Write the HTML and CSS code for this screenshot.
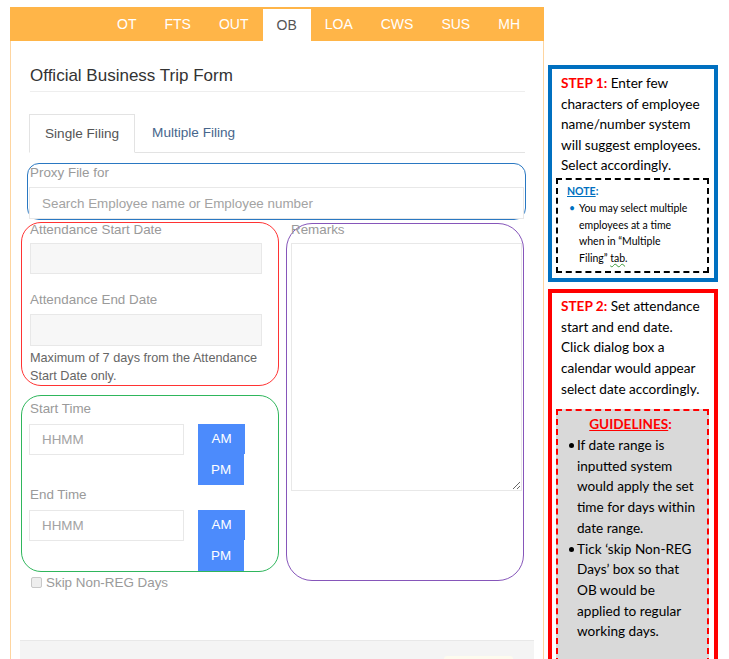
FILE: index.html
```html
<!DOCTYPE html>
<html lang="en">
<head>
<meta charset="utf-8">
<title>Official Business Trip Form</title>
<link rel="stylesheet" href="styles.css">
</head>
<body>
<div class="page">
  <div class="panel">
    <ul class="topnav">
      <li>OT</li>
      <li>FTS</li>
      <li>OUT</li>
      <li class="active">OB</li>
      <li>LOA</li>
      <li>CWS</li>
      <li>SUS</li>
      <li>MH</li>
    </ul>
    <div class="body">
      <h3 class="title">Official Business Trip Form</h3>
      <ul class="tabs">
        <li class="active">Single Filing</li>
        <li class="link">Multiple Filing</li>
      </ul>
      <div class="proxy">
        <label class="lbl">Proxy File for</label>
        <input class="field search" type="text" placeholder="Search Employee name or Employee number">
      </div>
      <div class="row">
        <div class="left">
          <div class="dates">
            <label class="lbl first">Attendance Start Date</label>
            <input class="field ro d1" type="text">
            <label class="lbl l2">Attendance End Date</label>
            <input class="field ro d2" type="text">
            <p class="help">Maximum of 7 days from the Attendance Start Date only.</p>
          </div>
          <div class="times">
            <label class="lbl st">Start Time</label>
            <div class="trow">
              <input class="field hh" type="text" placeholder="HHMM">
              <div class="ampm">
                <span class="btn am">AM</span>
                <span class="btn pm">PM</span>
              </div>
            </div>
            <label class="lbl et">End Time</label>
            <div class="trow">
              <input class="field hh" type="text" placeholder="HHMM">
              <div class="ampm">
                <span class="btn am">AM</span>
                <span class="btn pm">PM</span>
              </div>
            </div>
          </div>
          <label class="skip"><input type="checkbox" class="chk"> Skip Non-REG Days</label>
        </div>
        <div class="remarks">
          <label class="lbl first">Remarks</label>
          <textarea class="area"></textarea>
        </div>
      </div>
    </div>
    <div class="footer"><span class="fbtn"></span></div>
  </div>

  <div class="notes">
    <div class="step step1">
      <p class="steptext"><b class="red">STEP 1:</b> Enter few<br>characters of employee<br>name/number system<br>will suggest employees.<br>Select accordingly.</p>
      <div class="notebox">
        <p class="notehead"><u>NOTE</u>:</p>
        <ul class="notelist">
          <li>You may select multiple<br>employees at a time<br>when in “Multiple<br>Filing” <span class="spell">tab</span>.</li>
        </ul>
      </div>
    </div>
    <div class="step step2">
      <p class="steptext"><b class="red">STEP 2:</b> Set attendance<br>start and end date.<br>Click dialog box a<br>calendar would appear<br>select date accordingly.</p>
      <div class="guide">
        <p class="guidehead"><u>GUIDELINES</u>:</p>
        <ul class="guidelist">
          <li>If date range is<br>inputted system<br>would apply the set<br>time for days within<br>date range.</li>
          <li>Tick ‘skip Non-REG<br>Days’ box so that<br>OB would be<br>applied to regular<br>working days.</li>
        </ul>
      </div>
    </div>
  </div>
</div>
</body>
</html>
```

FILE: styles.css
```css
* { box-sizing: border-box; }

body {
  margin: 0;
  background: #fff;
  font-family: "Liberation Sans", Arial, sans-serif;
}

.page {
  display: flex;
  align-items: flex-start;
  height: 659px;
  overflow: hidden;
}

/* ---------- left panel ---------- */
.panel {
  margin: 7px 0 0 10px;
  width: 534px;
  min-height: 700px;
  border-left: 1px solid #fed5a0;
  border-right: 1px solid #fed5a0;
}

.topnav {
  display: flex;
  justify-content: flex-end;
  list-style: none;
  margin: 0 -1px;
  padding: 0 10px 0 0;
  height: 34px;
  background: #ffb548;
}

.topnav li {
  padding: 0 14px;
  line-height: 34px;
  font-size: 14px;
  color: #fff;
}

.topnav li.active {
  margin-top: 2px;
  line-height: 32px;
  background: #fff;
  color: #555;
}

.body {
  padding: 0 18px 0 19px;
}

.title {
  margin: 24px 0 0;
  padding-bottom: 5px;
  font-size: 17px;
  font-weight: normal;
  line-height: 21px;
  color: #333;
  border-bottom: 1px solid #eee;
}

.tabs {
  display: flex;
  list-style: none;
  margin: 22px 0 0;
  padding: 0;
  height: 39px;
  border-bottom: 1px solid #e3e3e3;
}

.tabs li {
  padding: 0 15px;
  line-height: 37px;
  font-size: 13.6px;
  color: #555;
}

.tabs li.active {
  margin-left: -1px;
  height: 39px;
  border: 1px solid #e3e3e3;
  border-bottom-color: #fff;
  background: #fff;
}

.tabs li.link {
  margin-left: 2px;
  color: #47668c;
}

.lbl {
  display: block;
  font-size: 13.4px;
  line-height: 17px;
  color: #9a9a9a;
}

.field {
  display: block;
  margin: 0;
  padding: 0 12px;
  font-family: "Liberation Sans", Arial, sans-serif;
  font-size: 13.4px;
  color: #555;
  background: #fff;
  border: 1px solid #e8e8e8;
  border-radius: 0;
  outline: none;
}

.field::placeholder { color: #a3a3a3; }

/* proxy group (blue annotation) */
.proxy {
  margin: 10px 0 0 -3px;
  width: 499px;
  padding: 0 0 0 2px;
  border: 1px solid #2a78c2;
  border-radius: 12px;
}

.search {
  margin: 6px 0 0 -1px;
  width: 495px;
  height: 32px;
}

.row {
  display: flex;
  align-items: flex-start;
  margin-top: 2px;
}

.left { width: 249px; }

/* dates (red annotation) */
.dates {
  margin-left: -9px;
  width: 258px;
  padding-left: 8px;
  border: 1px solid #f33;
  border-radius: 20px;
}

.lbl.first { margin-top: -2px; }

.ro {
  width: 232px;
  background: #f7f7f7;
}

.d1 { margin-top: 5px; height: 31px; }
.l2 { margin-top: 17px; }
.d2 { margin-top: 6px; height: 32px; }

.help {
  margin: 3px 0 0;
  width: 236px;
  font-size: 12.7px;
  line-height: 18px;
  color: #666;
}

/* times (green annotation) */
.times {
  margin: 9px 0 0 -9px;
  width: 258px;
  padding-left: 8px;
  border: 1px solid #2fb65c;
  border-radius: 20px;
}

.st { margin-top: 4px; }
.et { margin-top: 1px; }

.trow {
  display: flex;
  align-items: flex-start;
  margin-top: 7px;
}

.hh {
  margin-left: -1px;
  width: 155px;
  height: 31px;
}

.ampm {
  display: flex;
  flex-direction: column;
  margin-left: 14px;
}

.btn {
  display: block;
  background: #4c8bfc;
  color: #fff;
  font-size: 13.4px;
  text-align: center;
}

.am { width: 47px; height: 30px; line-height: 29px; }
.pm { width: 46px; height: 31px; line-height: 31px; }

.skip {
  display: flex;
  align-items: center;
  margin-top: 2px;
  font-size: 13.4px;
  line-height: 17px;
  color: #9a9a9a;
}

.chk {
  appearance: none;
  -webkit-appearance: none;
  margin: 0 4px 0 1px;
  width: 11px;
  height: 11px;
  background: #eee;
  border: 1px solid #c8c8c8;
  border-radius: 2px;
}

/* remarks (purple annotation) */
.remarks {
  margin: 1px 0 0 7px;
  width: 238px;
  height: 358px;
  padding-left: 4px;
  border: 1px solid #8656ba;
  border-radius: 26px;
}

.remarks .lbl.first { margin-top: -3px; }

.area {
  display: block;
  margin: 5px 0 0;
  width: 231px;
  height: 248px;
  border: 1px solid #e8e8e8;
  border-radius: 0;
  outline: none;
  font-family: "Liberation Sans", Arial, sans-serif;
}

.footer {
  display: flex;
  justify-content: flex-end;
  margin: 49px 9px 0;
  padding: 15px 21px 0 0;
  height: 60px;
  background: #f4f4f4;
  border-top: 1px solid #e8e8e8;
}

.fbtn {
  display: block;
  width: 69px;
  height: 30px;
  background: #fdfbee;
  border-radius: 3px;
}

/* ---------- right annotations ---------- */
.notes {
  margin: 65px 0 0 4px;
  width: 170px;
  font-family: Lato, "Liberation Sans", sans-serif;
  color: #000;
}

.step {
  padding: 0 3px 0 9px;
  white-space: nowrap;
}

.step1 {
  padding-top: 4px;
  padding-bottom: 5px;
  border: 4px solid #0070c0;
}

.step2 {
  margin-top: 7px;
  padding-top: 3px;
  height: 400px;
  border: 4px solid #ff0000;
}

.steptext {
  margin: 0;
  font-size: 13.6px;
  line-height: 20.5px;
}

.step2 .steptext { line-height: 20.7px; }

.red { color: #ff0000; }

.notebox {
  margin: 2px 0 0 -5px;
  width: 153px;
  padding: 3px 4px 4px 9px;
  border: 2px dashed #000;
}

.notehead {
  margin: 0;
  font-size: 10.5px;
  font-weight: bold;
  line-height: 16.5px;
  color: #0070c0;
}

.notelist {
  list-style: none;
  margin: 1px 0 0;
  padding: 0 0 0 12px;
  font-size: 10.5px;
  line-height: 16.7px;
}

.notelist li { position: relative; }

.notelist li::before {
  content: "•";
  position: absolute;
  left: -10px;
  color: #0070c0;
}

.spell {
  text-decoration: underline wavy #3c9a3c;
  text-decoration-thickness: 1px;
}

.guide {
  margin: 10px 0 0 -5px;
  width: 153px;
  padding: 3px 4px 20px 0;
  background: #d9d9d9;
  border: 2px dashed #ff0000;
}

.guidehead {
  margin: 0;
  text-align: center;
  font-size: 13.6px;
  font-weight: bold;
  line-height: 20.7px;
  color: #ff0000;
}

.guidelist {
  list-style: none;
  margin: 0;
  padding: 0 0 0 19px;
  font-size: 13.6px;
  line-height: 20.7px;
}

.guidelist li { position: relative; }

.guidelist li::before {
  content: "";
  position: absolute;
  left: -8px;
  top: 8px;
  width: 5px;
  height: 5px;
  border-radius: 50%;
  background: #000;
}
```
